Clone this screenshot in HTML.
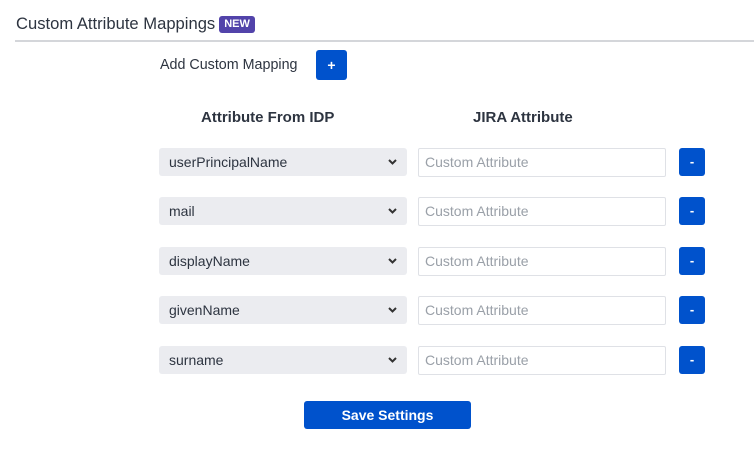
<!DOCTYPE html>
<html><head><style>
body{margin:0;width:754px;height:450px;background:#fff;font-family:"Liberation Sans",sans-serif;color:#172b4d;position:relative;overflow:hidden}
.a{position:absolute}
.t{left:16px;top:14px;font-size:16.6px;color:#2d3440}
.new{display:inline-block;background:#5243aa;color:#fff;font-size:11px;font-weight:bold;padding:2px 5px;border-radius:3px;vertical-align:2px;margin-left:4px;line-height:13px}
.hr{left:15px;right:0;top:40px;height:2px;background:#d4d6da}
.btn{background:#0052cc;color:#fff;border-radius:3px;text-align:center;font-weight:bold}
.sel{left:159px;width:248px;height:28px;background:#ebecf0;border-radius:3px;font-size:14px;line-height:28px;padding-left:10px;box-sizing:border-box;color:#2d3440}
.sel svg{position:absolute;right:10px;top:11px}
.in{left:418px;width:248px;height:29px;border:1px solid #dfe1e6;border-radius:2px;box-sizing:border-box;font-size:14px;line-height:27px;padding-left:6px;color:#9aa0a8}
.h{font-size:15px;font-weight:bold;top:109px;color:#2d3440}
</style></head><body>
<div class="a t">Custom Attribute Mappings<span class="new">NEW</span></div>
<div class="a hr"></div>
<div class="a" style="left:160px;top:57px;font-size:14.3px;color:#2d3440">Add Custom Mapping</div>
<div class="a btn" style="left:316px;top:50px;width:31px;height:30px;line-height:30px;font-size:14px">+</div>
<div class="a h" style="left:201px">Attribute From IDP</div>
<div class="a h" style="left:473px">JIRA Attribute</div>

<div class="a sel" style="top:148px">userPrincipalName<svg width="9" height="6"><path d="M1 1L4.5 4.5L8 1" stroke="#333" stroke-width="2" fill="none"/></svg></div>
<div class="a in" style="top:148px">Custom Attribute</div>
<div class="a btn" style="left:679px;top:148px;width:26px;height:28px;line-height:27px;font-size:13px">-</div>

<div class="a sel" style="top:197px">mail<svg width="9" height="6"><path d="M1 1L4.5 4.5L8 1" stroke="#333" stroke-width="2" fill="none"/></svg></div>
<div class="a in" style="top:197px">Custom Attribute</div>
<div class="a btn" style="left:679px;top:197px;width:26px;height:28px;line-height:27px;font-size:13px">-</div>

<div class="a sel" style="top:247px">displayName<svg width="9" height="6"><path d="M1 1L4.5 4.5L8 1" stroke="#333" stroke-width="2" fill="none"/></svg></div>
<div class="a in" style="top:247px">Custom Attribute</div>
<div class="a btn" style="left:679px;top:247px;width:26px;height:28px;line-height:27px;font-size:13px">-</div>

<div class="a sel" style="top:296px">givenName<svg width="9" height="6"><path d="M1 1L4.5 4.5L8 1" stroke="#333" stroke-width="2" fill="none"/></svg></div>
<div class="a in" style="top:296px">Custom Attribute</div>
<div class="a btn" style="left:679px;top:296px;width:26px;height:28px;line-height:27px;font-size:13px">-</div>

<div class="a sel" style="top:346px">surname<svg width="9" height="6"><path d="M1 1L4.5 4.5L8 1" stroke="#333" stroke-width="2" fill="none"/></svg></div>
<div class="a in" style="top:346px">Custom Attribute</div>
<div class="a btn" style="left:679px;top:346px;width:26px;height:28px;line-height:27px;font-size:13px">-</div>

<div class="a btn" style="left:304px;top:401px;width:167px;height:28px;line-height:28px;font-size:14px">Save Settings</div>
</body></html>
